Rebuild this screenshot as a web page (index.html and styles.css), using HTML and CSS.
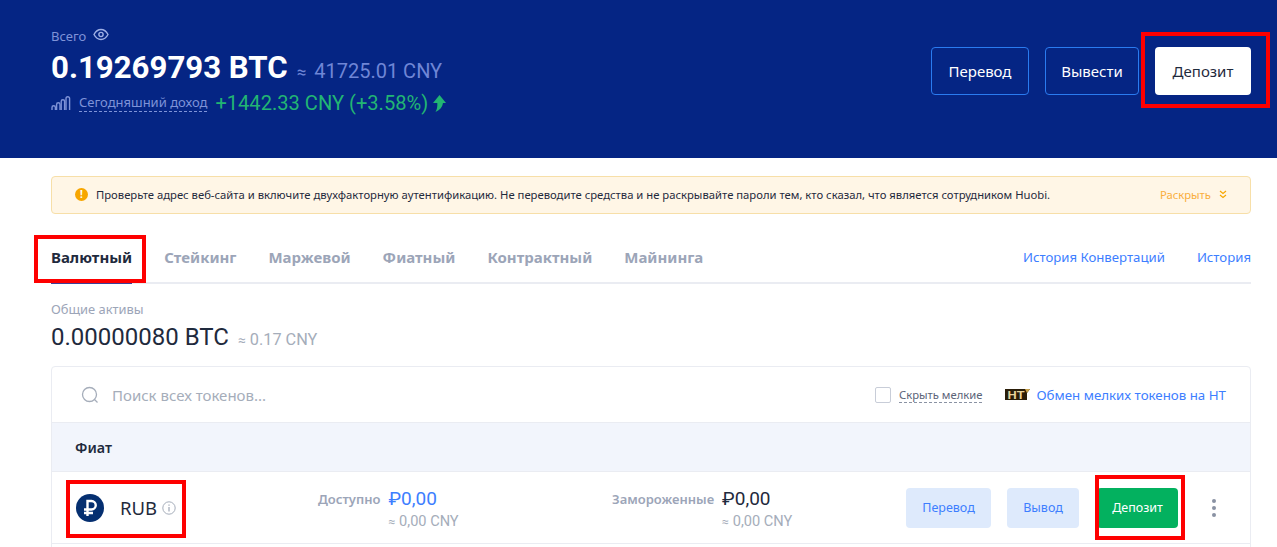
FILE: index.html
```html
<!DOCTYPE html>
<html lang="ru">
<head>
  <meta charset="UTF-8">
  <meta name="viewport" content="width=device-width, initial-scale=1">
  <title>Huobi — Баланс</title>
  <link rel="stylesheet" href="styles.css">
</head>
<body>
  <header class="hero">
    <div class="hero-left">
      <div class="total-label">
        <span>Всего</span>
        <svg class="eye" width="16" height="13" viewBox="0 0 16 13" fill="none" stroke="#9fb0e6" stroke-width="1.4">
          <path d="M1 6.500c1.800-3.400 4.100-5 7-5s5.200 1.600 7 5c-1.800 3.400-4.100 5-7 5s-5.200-1.600-7-5z"/>
          <circle cx="8" cy="6.500" r="2.100"/>
        </svg>
      </div>
      <div class="total-row">
        <span class="total-btc">0.19269793 BTC</span>
        <span class="total-cny"><span class="approx">≈</span> 41725.01 CNY</span>
      </div>
      <div class="income-row">
        <svg width="20" height="15" viewBox="0 0 20 15" fill="none" stroke="#7f93d8" stroke-width="1.400">
          <path d="M1 14v-2.500a1.700 1.700 0 0 1 3.400 0V14"/>
          <path d="M5.600 14V8.500a1.700 1.700 0 0 1 3.400 0V14"/>
          <path d="M10.200 14V5.500a1.700 1.700 0 0 1 3.400 0V14"/>
          <path d="M15 14V2.500a1.800 1.800 0 0 1 3.600 0V14"/>
        </svg>
        <span class="income-label">Сегодняшний доход</span>
        <span class="income-value">+1442.33 CNY (+3.58%)</span>
        <svg width="14" height="17" viewBox="0 0 14 17" fill="#22b573">
          <path d="M7.500 0L14 8h-3c-.5 4-3 7-7.500 9 1.500-2.500 2-5.500 1.800-9H1z"/>
        </svg>
      </div>
    </div>
    <div class="hero-actions">
      <button class="btn-outline btn-transfer">Перевод</button>
      <button class="btn-outline btn-withdraw">Вывести</button>
      <button class="btn-white">Депозит</button>
    </div>
  </header>

  <main class="content">
    <div class="notice">
      <span class="notice-icon">!</span>
      <span class="notice-text">Проверьте адрес веб-сайта и включите двухфакторную аутентификацию. Не переводите средства и не раскрывайте пароли тем, кто сказал, что является сотрудником Huobi.</span>
      <span class="notice-more">Раскрыть</span>
      <svg width="8" height="9" viewBox="0 0 8 9" fill="none" stroke="#f7a600" stroke-width="1.200">
        <path d="M1 1l3 2.500L7 1M1 5l3 2.500L7 5"/>
      </svg>
    </div>

    <nav class="tabs">
      <a class="tab active">Валютный</a>
      <a class="tab">Стейкинг</a>
      <a class="tab">Маржевой</a>
      <a class="tab">Фиатный</a>
      <a class="tab">Контрактный</a>
      <a class="tab">Майнинга</a>
      <div class="tabs-links">
        <a>История Конвертаций</a>
        <a>История</a>
      </div>
    </nav>

    <div class="assets">
      <div class="assets-label">Общие активы</div>
      <div class="assets-row">
        <span class="assets-btc">0.00000080 BTC</span>
        <span class="assets-cny"><span class="approx">≈</span> 0.17 CNY</span>
      </div>
    </div>

    <section class="card">
      <div class="toolbar">
        <svg class="search-icon" width="18" height="18" viewBox="0 0 18 18" fill="none" stroke="#a5adba" stroke-width="1.300">
          <circle cx="8.500" cy="8.500" r="7"/>
          <path d="M13.500 13.500l3 3"/>
        </svg>
        <span class="search-text">Поиск всех токенов...</span>
        <span class="checkbox"></span>
        <span class="hide-small">Скрыть мелкие</span>
        <svg class="ht-badge" width="25" height="13" viewBox="0 0 25 13">
          <path d="M0 1h25l-3 4v7H0z" fill="#2a1d08"/>
          <path d="M20 1h5l-3 4z" fill="#c9a24a"/>
          <text x="2.500" y="10.500" font-family="Liberation Sans" font-size="10" font-weight="700" fill="#e8d29a" textLength="17" lengthAdjust="spacingAndGlyphs">HT</text>
        </svg>
        <a class="exchange-link">Обмен мелких токенов на НТ</a>
      </div>
      <div class="group-head">Фиат</div>
      <div class="row">
        <div class="coin">
          <span class="coin-logo">
            <svg width="14" height="18" viewBox="0 0 14 18" fill="none" stroke="#fff" stroke-width="2.400">
              <path d="M4.500 17V2h4a4 4 0 0 1 0 8.500H1M1 14h9"/>
            </svg>
          </span>
          <span class="coin-name">RUB</span>
          <svg width="14" height="14" viewBox="0 0 14 14" fill="none" stroke="#a5adba">
            <circle cx="7" cy="7" r="6.200"/>
            <path d="M7 6v4.500M7 3.500v1.300" stroke-width="1.300"/>
          </svg>
        </div>
        <div class="balance balance-free">
          <span class="balance-label">Доступно</span>
          <div>
            <div class="balance-value blue">₽0,00</div>
            <div class="balance-cny"><span class="approx">≈</span> 0,00 CNY</div>
          </div>
        </div>
        <div class="balance balance-frozen">
          <span class="balance-label">Замороженные</span>
          <div>
            <div class="balance-value">₽0,00</div>
            <div class="balance-cny"><span class="approx">≈</span> 0,00 CNY</div>
          </div>
        </div>
        <div class="row-actions">
          <button class="btn-light btn-row-transfer">Перевод</button>
          <button class="btn-light btn-row-withdraw">Вывод</button>
          <button class="btn-green">Депозит</button>
          <span class="dots"><i></i><i></i><i></i></span>
        </div>
      </div>
    </section>
  </main>

  <!-- red annotation frames over the screenshot -->
  <div class="mark mark-deposit"></div>
  <div class="mark mark-tab"></div>
  <div class="mark mark-rub"></div>
  <div class="mark mark-green"></div>
</body>
</html>
```

FILE: styles.css
```css
html, body {
  height: 547px;
  overflow: hidden;
}

body {
  margin: 0;
  position: relative;
  background-color: #ffffff;
  color: #1f2a3d;
  font-family: 'Noto Sans', 'Open Sans', sans-serif;
}

button {
  font-family: inherit;
  cursor: pointer;
  padding: 0;
}

.approx {
  font-size: 0.85em;
}

/* hero */
.hero {
  height: 158px;
  box-sizing: border-box;
  background-color: #052584;
  padding: 0 26px 0 51px;
  display: flex;
  justify-content: space-between;
}

.hero-left {
  padding-top: 27px;
}

.total-label {
  display: flex;
  align-items: center;
  gap: 7px;
  height: 17px;
  font-size: 13px;
  color: #7f93d8;
}

.eye {
  margin-top: -2px;
}

.total-row {
  display: flex;
  align-items: baseline;
  gap: 9px;
  margin-top: 3px;
  height: 42px;
  line-height: 42px;
  font-family: Roboto, sans-serif;
}

.total-btc {
  font-size: 31.200px;
  font-weight: 700;
  color: #ffffff;
}

.total-cny {
  font-size: 20px;
  color: #6f86d6;
}

.total-cny .approx {
  margin-right: 3px;
}

.income-row {
  display: flex;
  align-items: center;
  height: 24px;
  margin-top: 2px;
}

.income-label {
  margin-left: 8px;
  font-size: 13px;
  line-height: 17px;
  color: #7f93d8;
  border-bottom: 1px dashed #7f93d8;
}

.income-value {
  margin: 0 4px 0 8px;
  font-family: Roboto, sans-serif;
  font-size: 20.100px;
  color: #22b573;
}

.hero-actions {
  display: flex;
  gap: 16px;
  padding-top: 47px;
}

.btn-outline,
.btn-white {
  height: 48px;
  border-radius: 4px;
  font-size: 15px;
}

.btn-outline {
  background: transparent;
  color: #ffffff;
  border: 1px solid #2a7bf0;
}

.btn-transfer {
  width: 98px;
}

.btn-withdraw {
  width: 94px;
}

.btn-white {
  width: 96px;
  background: #ffffff;
  color: #1f2a3d;
  border: none;
}

/* content */
.content {
  padding: 18px 26px 0 51px;
}

.notice {
  height: 38px;
  box-sizing: border-box;
  display: flex;
  align-items: center;
  padding: 0 23px 2px;
  background-color: #fff6e6;
  border: 1px solid #f7dfa8;
  border-radius: 4px;
  font-size: 11.280px;
  color: #1f2a3d;
}

.notice-icon {
  width: 13px;
  height: 13px;
  border-radius: 50%;
  background: #f7a600;
  color: #ffffff;
  font-size: 10px;
  font-weight: 700;
  line-height: 13px;
  text-align: center;
  margin-right: 8px;
}

.notice-text {
  flex: 1;
  white-space: nowrap;
}

.notice-more {
  color: #f9ae3d;
  margin-right: 8px;
}

.tabs {
  display: flex;
  align-items: flex-end;
  gap: 32px;
  height: 70px;
  padding-bottom: 14px;
  border-bottom: 2px solid #eaecf2;
  box-sizing: border-box;
}

.tab {
  font-size: 15px;
  line-height: 22px;
  font-weight: 700;
  color: #9ca5b8;
}

.tab.active {
  position: relative;
  color: #1f2a3d;
}

.tab.active::after {
  content: "";
  position: absolute;
  left: 0;
  right: 0;
  bottom: -16px;
  height: 2px;
  background-color: #3c4099;
}

.tabs-links {
  margin-left: auto;
  display: flex;
  gap: 32px;
  font-size: 13.200px;
  line-height: 22px;
  color: #3d7eff;
}

.assets {
  padding-top: 17px;
}

.assets-label {
  font-size: 12.900px;
  line-height: 17px;
  color: #9ca5b8;
}

.assets-row {
  display: flex;
  align-items: baseline;
  gap: 9px;
  margin-top: 2px;
  height: 34px;
  line-height: 34px;
  font-family: Roboto, sans-serif;
}

.assets-btc {
  font-size: 24px;
  color: #1f2a3d;
}

.assets-cny {
  font-size: 16.300px;
  color: #a5adba;
}

/* card */
.card {
  margin-top: 12px;
  border: 1px solid #eaecf2;
  border-radius: 4px 4px 0 0;
  height: 300px;
}

.toolbar {
  height: 55px;
  display: flex;
  align-items: center;
  padding: 0 24px 0 29px;
  font-size: 13.300px;
}

.search-text {
  margin-left: 13px;
  flex: 1;
  font-size: 15px;
  color: #a5adba;
}

.checkbox {
  width: 14px;
  height: 14px;
  border: 1px solid #c8cdd8;
  border-radius: 2px;
  margin-right: 8px;
}

.hide-small {
  font-size: 11.250px;
  line-height: 15px;
  color: #5b6478;
  border-bottom: 1px dashed #8a92a3;
  margin-right: 23px;
}

.ht-badge {
  margin-right: 6px;
}

.exchange-link {
  color: #3d7eff;
}

.group-head {
  height: 50px;
  box-sizing: border-box;
  padding-left: 23px;
  background-color: #f2f5fc;
  border-top: 1px solid #eaecf2;
  border-bottom: 1px solid #eaecf2;
  font-size: 14.300px;
  font-weight: 600;
  line-height: 49px;
}

.row {
  height: 71px;
  display: flex;
  align-items: center;
  padding-left: 24px;
  border-bottom: 1px solid #eaecf2;
}

.coin {
  display: flex;
  align-items: center;
  width: 242px;
}

.coin-logo {
  width: 28px;
  height: 28px;
  border-radius: 50%;
  background-color: #052f70;
  display: flex;
  align-items: center;
  justify-content: center;
  margin-right: 16px;
}

.coin-name {
  font-size: 18.500px;
  margin-right: 5px;
  color: #1f2a3d;
}

.balance {
  display: flex;
  align-items: flex-start;
  gap: 8px;
}

.balance-free {
  width: 294px;
}

.balance-frozen {
  width: 294px;
}

.balance-label {
  font-size: 13px;
  font-weight: 600;
  color: #9ca5b8;
  line-height: 24px;
  margin-top: 3px;
}

.balance-value {
  font-family: Roboto, sans-serif;
  font-size: 19px;
  line-height: 24px;
  margin-top: 3px;
}

.balance-value.blue {
  color: #3d7eff;
}

.balance-cny {
  font-family: Roboto, sans-serif;
  font-size: 14.600px;
  line-height: 20px;
  color: #a5adba;
}

.row-actions {
  display: flex;
  align-items: center;
  gap: 16px;
}

.btn-light,
.btn-green {
  height: 40px;
  border: none;
  border-radius: 4px;
  font-size: 12.500px;
}

.btn-light {
  background-color: #deeafc;
  color: #3d7eff;
}

.btn-row-transfer {
  width: 85px;
}

.btn-row-withdraw {
  width: 72px;
}

.btn-green {
  width: 81px;
  margin-left: 2px;
  background-color: #03b15f;
  color: #ffffff;
}

.dots {
  display: flex;
  flex-direction: column;
  gap: 3px;
  margin-left: 18px;
}

.dots i {
  display: block;
  width: 4px;
  height: 4px;
  border-radius: 50%;
  background: #8a92a3;
}

/* annotation frames */
.mark {
  position: absolute;
  box-sizing: border-box;
  border: 4px solid #fe0000;
}

.mark-deposit {
  left: 1141px;
  top: 32px;
  width: 129px;
  height: 76px;
}

.mark-tab {
  left: 34px;
  top: 235px;
  width: 112px;
  height: 48px;
}

.mark-rub {
  left: 66px;
  top: 480px;
  width: 120px;
  height: 58px;
}

.mark-green {
  left: 1095px;
  top: 475px;
  width: 90px;
  height: 65px;
}
```
